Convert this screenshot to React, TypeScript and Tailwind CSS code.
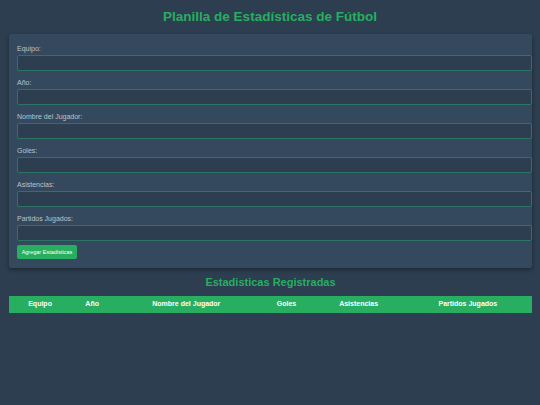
import React from "react"

const fields = ["Equipo:", "Año:", "Nombre del Jugador:", "Goles:", "Asistencias:", "Partidos Jugados:"]

const columns = [
  { label: "Equipo", w: "w-[62px]" },
  { label: "Año", w: "w-[42px]" },
  { label: "Nombre del Jugador", w: "w-[146px]" },
  { label: "Goles", w: "w-[54px]" },
  { label: "Asistencias", w: "w-[90px]" },
  { label: "Partidos Jugados", w: "w-[128px]" },
]

export default function App() {
  return (
    <div className="min-h-[405px] w-[540px] bg-[#2c3e50] pt-[8px] font-['Liberation_Sans',Arial,sans-serif]">
      <h1 className="text-center text-[13.5px] font-bold leading-[17px] text-[#27ae60]">
        Planilla de Estadísticas de Fútbol
      </h1>

      <div className="pl-[9px]">
        <form className="mt-[9px] w-[523px] rounded-[2px] bg-[#34495e] pb-[9px] pl-[8px] pt-[11px] shadow-[0_2px_4px_rgba(0,0,0,0.35)]">
          {fields.map((f, i) => (
            <div key={f} className={i === fields.length - 1 ? "mb-[4px]" : "mb-[8px]"}>
              <label className="block text-[7px] leading-[8px] text-[#bdc3c7]">{f}</label>
              <input
                type="text"
                className="mt-[2px] block h-[16px] w-[515px] rounded-[2px] border border-[#2e7363] bg-[#2c3e50] outline-none"
              />
            </div>
          ))}
          <button
            type="button"
            className="block h-[14px] w-[60px] rounded-[2px] bg-[#27ae60] text-[5.5px] leading-[14px] text-white"
          >
            Agregar Estadísticas
          </button>
        </form>

        <h2 className="mt-[8px] w-[523px] text-center text-[11px] font-bold leading-[13px] text-[#27ae60]">
          Estadisticas Registradas
        </h2>

        <table className="mt-[7px] w-[523px] table-fixed border-collapse">
          <thead>
            <tr className="h-[17px] bg-[#27ae60]">
              {columns.map((c) => (
                <th key={c.label} className={`${c.w} p-0 text-center text-[7px] font-bold text-white`}>
                  {c.label}
                </th>
              ))}
            </tr>
          </thead>
          <tbody />
        </table>
      </div>
    </div>
  )
}
